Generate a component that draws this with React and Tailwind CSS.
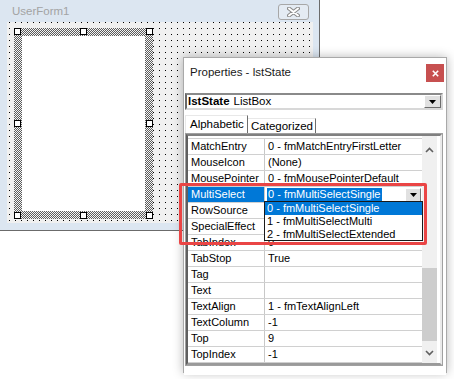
const rows = [
  ["MatchEntry", "0 - fmMatchEntryFirstLetter"],
  ["MouseIcon", "(None)"],
  ["MousePointer", "0 - fmMousePointerDefault"],
  ["MultiSelect", "0 - fmMultiSelectSingle", true],
  ["RowSource", ""],
  ["SpecialEffect", ""],
  ["TabIndex", "0"],
  ["TabStop", "True"],
  ["Tag", ""],
  ["Text", ""],
  ["TextAlign", "1 - fmTextAlignLeft"],
  ["TextColumn", "-1"],
  ["Top", "9"],
  ["TopIndex", "-1"],
];

const handles = [
  [0, 0], [66, 0], [132, 0],
  [0, 92], [132, 92],
  [0, 184], [66, 184], [132, 184],
];

const DownTriangle = () => (
  <svg width="7" height="4" viewBox="0 0 7 4">
    <path d="M0 0 H7 L3.5 4 Z" fill="#000" />
  </svg>
);

const Chevron = ({ up }) => (
  <svg width="9" height="6" viewBox="0 0 9 6">
    <polyline
      points={up ? "1,5 4.5,1.5 8,5" : "1,1 4.5,4.5 8,1"}
      fill="none"
      stroke="#606060"
      strokeWidth="1.6"
    />
  </svg>
);

const UserForm = () => {
  return (
    <div className="absolute left-0 top-0 w-[320px] h-[231px] bg-[#dce6f1] border-r border-b border-[#6b6b6b] flex flex-col">
      <div className="h-[22px] flex items-center justify-between pl-[12px] pr-[10px]">
        <span className="text-[11.5px] text-[#a3a3a3] pt-[2px]">UserForm1</span>
        <div className="w-[31px] h-[16px] mt-[2px] rounded-[3px] border border-[#a7a7a7] bg-[#e4ebf3] flex items-center justify-center">
          <svg width="13" height="10" viewBox="0 0 13 10">
            <path d="M2 1.5 L11 8.5 M11 1.5 L2 8.5" stroke="#8a8a8a" strokeWidth="4" strokeLinecap="round" />
            <path d="M2 1.5 L11 8.5 M11 1.5 L2 8.5" stroke="#ffffff" strokeWidth="2" strokeLinecap="round" />
          </svg>
        </div>
      </div>

      <div className="relative flex-1 ml-[7px] mr-[6px] mb-[7px] bg-[#f0f0f0] bg-[image:linear-gradient(#f0f0f0_5px,transparent_5px),linear-gradient(90deg,#000_1px,transparent_1px)] bg-[length:6px_6px] bg-[position:2px_1px]">
        <div className="absolute left-[7px] top-[6px] w-[139px] h-[191px] p-[8px] bg-[#f4f4f4] bg-[image:repeating-conic-gradient(#5c5c5c_0_25%,#f4f4f4_0_50%)] bg-[length:2px_2px]">
          <div className="w-full h-full bg-white" />
          {handles.map(([l, t], i) => (
            <div
              key={i}
              className="absolute w-[7px] h-[7px] bg-white border border-black"
              style={{ left: l, top: t }}
            />
          ))}
        </div>
      </div>
    </div>
  );
};

const PropertyRow = ({ name, value, active }) => {
  return (
    <div className="flex h-[16px] border-b border-[#d0d0d0] leading-[15px]">
      <div
        className={
          active
            ? "w-[77px] shrink-0 border-r border-[#c8c8c8] pl-[3px] bg-[#0078d7] text-white"
            : "w-[77px] shrink-0 border-r border-[#c8c8c8] pl-[3px] bg-white text-black"
        }
      >
        {name}
      </div>
      <div className="flex-1 bg-white pl-[2px] flex items-center">
        {active ? (
          <>
            <span className="bg-[#0078d7] text-white px-[1px] leading-[13px]">{value}</span>
            <div className="ml-auto mr-[1px] w-[16px] h-[14px] bg-[#e1e1e1] border border-t-white border-l-white border-r-[#7a7a7a] border-b-[#7a7a7a] flex items-center justify-center">
              <DownTriangle />
            </div>
          </>
        ) : (
          <span className="pl-[1px]">{value}</span>
        )}
      </div>
    </div>
  );
};

const PropertiesWindow = () => {
  return (
    <div className="absolute left-[183px] top-[57px] w-[264px] h-[316px] bg-[#f0f0f0] border border-[#a9a9a9] shadow-[0_0_10px_rgba(0,0,0,0.28)] flex flex-col">
      <div className="h-[30px] shrink-0 bg-white flex items-center justify-between pl-[6px] pr-[2px]">
        <span className="text-[11.5px] text-[#1a1a1a] pb-[1px]">Properties - lstState</span>
        <div className="w-[18px] h-[18px] bg-[#c75050] flex items-center justify-center">
          <svg width="7" height="7" viewBox="0 0 7 7">
            <path d="M0.8 0.8 L6.2 6.2 M6.2 0.8 L0.8 6.2" stroke="#fff" strokeWidth="1.6" />
          </svg>
        </div>
      </div>

      <div className="flex-1 flex flex-col bg-white px-[1px] pb-[9px]">
        <div className="mt-[5px] mr-[2px] h-[17px] flex items-center bg-white border-2 border-t-[#8a8a8a] border-l-[#696969] border-r-[#d8d8d8] border-b-[#d8d8d8]">
          <span className="pl-[1px] text-[11.5px] font-bold">lstState</span>
          <span className="pl-[4px] text-[11.5px]">ListBox</span>
          <div className="ml-auto w-[17px] h-[13px] bg-[#e1e1e1] border border-t-white border-l-white border-r-[#6e6e6e] border-b-[#6e6e6e] flex items-center justify-center">
            <DownTriangle />
          </div>
        </div>

        <div className="mt-[5px] h-[18px] flex items-end">
          <div className="h-[18px] w-[63px] border border-b-0 border-t-[#e8e8e8] border-l-[#e8e8e8] border-r-[#6e6e6e] bg-white pl-[4px] leading-[16px] text-[11.5px]">
            Alphabetic
          </div>
          <div className="h-[15px] w-[68px] border border-b-0 border-t-[#e8e8e8] border-l-0 border-r-[#6e6e6e] bg-white pl-[3px] leading-[15px] text-[11.5px]">
            Categorized
          </div>
        </div>

        <div className="flex-1 mr-[2px] border border-[#a0a0a0] flex">
          <div className="flex-1 border-2 border-t-[#808080] border-l-[#5f5f5f] border-r-[#eaeaea] border-b-[#9a9a9a] flex bg-white">
            <div className="flex-1 pt-[2px] flex flex-col text-[11px]">
              <div className="border-b border-[#d0d0d0]" />
              {rows.map(([n, v, a]) => (
                <PropertyRow key={n} name={n} value={v} active={a} />
              ))}
            </div>
            <div className="w-[15px] bg-[#f0f0f0] flex flex-col items-center">
              <div className="h-[18px] mt-[5px] flex items-center">
                <Chevron up />
              </div>
              <div className="h-[109px]" />
              <div className="w-[15px] h-[73px] bg-[#cdcdcd]" />
              <div className="flex-1" />
              <div className="h-[16px] mb-[2px] flex items-center">
                <Chevron />
              </div>
            </div>
            <div className="w-[3px] bg-white" />
          </div>
        </div>
      </div>
    </div>
  );
};

const DropList = () => {
  const items = ["0 - fmMultiSelectSingle", "1 - fmMultiSelectMulti", "2 - fmMultiSelectExtended"];
  return (
    <div className="absolute left-[264px] top-[201px] w-[159px] h-[40px] bg-white border border-[#1a1a1a] text-[11px] leading-[13px]">
      {items.map((it, i) => (
        <div
          key={it}
          className={i === 0 ? "h-[13px] pl-[2px] bg-[#0078d7] text-white" : "h-[13px] pl-[2px] text-black"}
        >
          {it}
        </div>
      ))}
    </div>
  );
};

export default function App() {
  return (
    <div className="relative w-[454px] h-[379px] bg-white overflow-hidden font-['Liberation_Sans',Arial,sans-serif] text-black">
      <UserForm />
      <PropertiesWindow />
      <DropList />
      <div className="absolute left-[179px] top-[183px] w-[248px] h-[62px] border-[3px] border-[#ea4545] rounded-[2px]" />
    </div>
  );
}
